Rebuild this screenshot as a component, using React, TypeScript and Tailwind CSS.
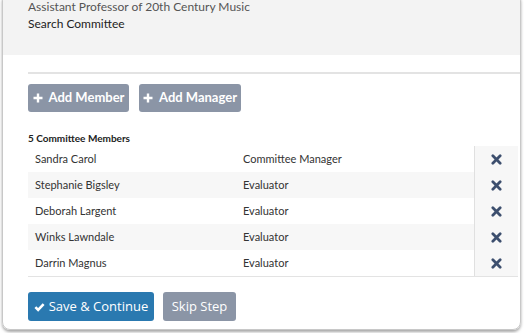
import React from "react";

const members = [
  { name: "Sandra Carol", role: "Committee Manager" },
  { name: "Stephanie Bigsley", role: "Evaluator" },
  { name: "Deborah Largent", role: "Evaluator" },
  { name: "Winks Lawndale", role: "Evaluator" },
  { name: "Darrin Magnus", role: "Evaluator" },
];

function XIcon() {
  return (
    <svg width="11" height="11" viewBox="0 0 12 12">
      <path d="M2 2 L10 10 M10 2 L2 10" stroke="#3d4f6e" strokeWidth="3" strokeLinecap="round" />
    </svg>
  );
}

function Plus() {
  return (
    <svg width="10" height="10" viewBox="0 0 10 10">
      <path d="M5 0.5 V9.5 M0.5 5 H9.5" stroke="white" strokeWidth="2.4" />
    </svg>
  );
}

export default function App() {
  return (
    <div className="w-[524px] h-[333px] bg-white overflow-hidden" style={{ fontFamily: "Lato, 'Open Sans', sans-serif" }}>
      <div className="mt-[-7px] ml-[2px] mr-[3px] h-[337px] rounded-lg border border-[#c8c8c8] shadow-[0_2px_3px_rgba(0,0,0,0.35)] overflow-hidden flex flex-col">
        <div className="bg-[#f3f3f3] h-[61px] pl-[25px] pt-[5px]">
          <div className="text-[12px] leading-[16px] text-[#555]">Assistant Professor of 20th Century Music</div>
          <div className="text-[12px] leading-[16px] text-[#222] mt-[1px]">Search Committee</div>
        </div>
        <div className="h-[17px]" />
        <div className="ml-[25px] h-[2px] bg-[#e3e3e3]" />
        <div className="pl-[25px] pr-[2px] pt-[10px]">
          <div className="flex gap-[10px]">
            <button className="h-[28px] w-[101px] rounded-[3px] bg-[#8b95a6] text-white text-[13px] font-bold flex items-center justify-center gap-[6px]">
              <Plus />Add Member
            </button>
            <button className="h-[28px] w-[102px] rounded-[3px] bg-[#8b95a6] text-white text-[13px] font-bold flex items-center justify-center gap-[6px]">
              <Plus />Add Manager
            </button>
          </div>
          <div className="mt-[20px] text-[10px] font-bold text-[#222] leading-[12px]">5 Committee Members</div>
          <div className="mt-[2px] border-b border-[#e3e3e3]">
            {members.map((m, i) => (
              <div key={m.name} className={`flex h-[26px] items-center text-[11px] text-[#333] ${i % 2 === 1 ? "bg-[#f7f7f7]" : "bg-white"}`}>
                <div className="w-[215px] pl-[7px]">{m.name}</div>
                <div className="flex-1">{m.role}</div>
                <div className="w-[44px] h-full border-l border-[#e0e0e0] bg-[#f7f7f7] flex items-center justify-center">
                  <XIcon />
                </div>
              </div>
            ))}
          </div>
          <div className="mt-[15px] flex gap-[9px]">
            <button className="h-[29px] w-[126px] rounded-[3px] bg-[#2a79b0] text-white text-[13px] font-medium flex items-center justify-center gap-[4px]" style={{ fontFamily: "'Open Sans', sans-serif" }}>
              <svg width="11" height="10" viewBox="0 0 12 10">
                <path d="M1.5 5.2 L4.5 8.2 L10.5 1.8" stroke="white" strokeWidth="2.8" fill="none" />
              </svg>
              Save &amp; Continue
            </button>
            <button className="h-[29px] w-[73px] rounded-[3px] bg-[#8b95a6] text-white text-[13px] font-medium flex items-center justify-center" style={{ fontFamily: "'Open Sans', sans-serif" }}>
              Skip Step
            </button>
          </div>
        </div>
      </div>
    </div>
  );
}
